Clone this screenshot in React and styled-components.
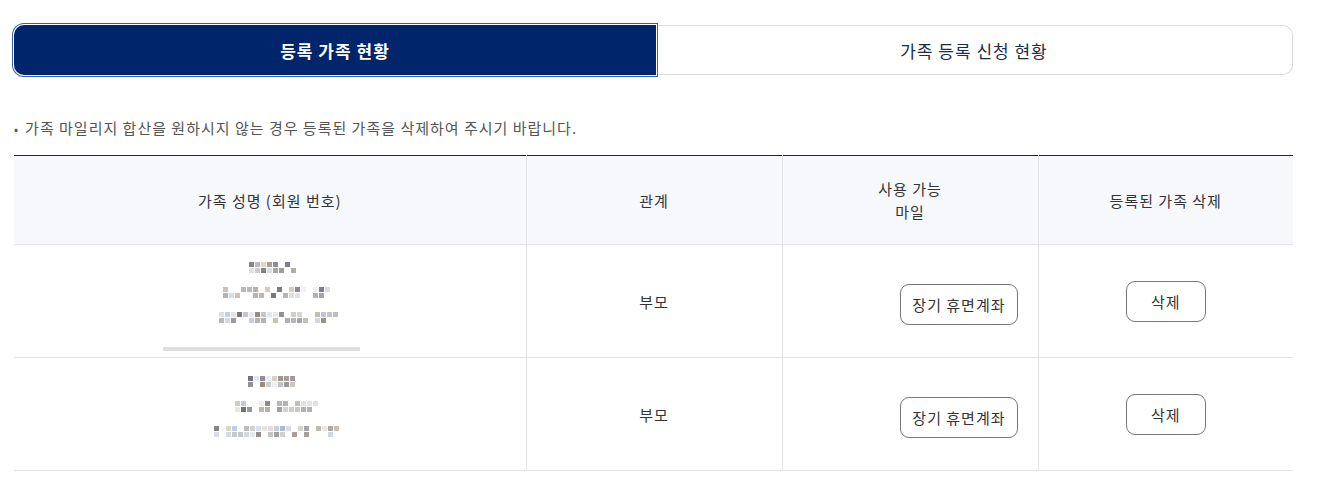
import React from 'react';
import styled, { createGlobalStyle } from 'styled-components';

const GlobalStyle = createGlobalStyle`
  body {
    margin: 0;
    background: #fff;
    font-family: "Noto Sans CJK KR", "Noto Sans", sans-serif;
    letter-spacing: 1px;
  }
`;

const Page = styled.div`
  width: 1324px;
  padding: 25px 0 0 14px;
  box-sizing: border-box;
`;

const Tabs = styled.div`
  display: flex;
  width: 1279px;
  height: 50px;
`;

const Tab = styled.button`
  height: 100%;
  font-family: inherit;
  font-size: 17px;
  letter-spacing: 1px;
  cursor: pointer;
  ${({ $active }) =>
    $active
      ? `
    flex: 0 0 642px;
    background: #00256a;
    color: #fff;
    font-weight: 700;
    border: none;
    border-radius: 10px 0 0 10px;
    box-shadow: 0 0 0 1px #fff, 0 0 0 2px #2f62ae;
    position: relative;
    z-index: 1;
  `
      : `
    flex: 1;
    background: #fff;
    color: #1c2b4a;
    font-weight: 400;
    border: 1px solid #dcdcdc;
    border-left: none;
    border-radius: 0 10px 10px 0;
  `}
`;

const Note = styled.p`
  margin: 44px 0 0;
  font-size: 15px;
  color: #555;
  line-height: 18px;
  &::before {
    content: '•';
    margin-right: 6px;
    font-size: 12px;
  }
`;

const Table = styled.table`
  margin-top: 17px;
  width: 1279px;
  border-collapse: collapse;
  table-layout: fixed;
  border-top: 1px solid #16284a;
`;

const HeadCell = styled.th`
  height: 88px;
  padding: 0;
  background: #f7f8fc;
  font-weight: 400;
  font-size: 15px;
  line-height: 23px;
  color: #333;
  border-left: 1px solid #e4e4e4;
  border-bottom: 1px solid #e4e4e4;
  &:first-child { border-left: none; }
`;

const Cell = styled.td`
  height: 112px;
  padding: 0;
  font-size: 15px;
  color: #333;
  text-align: center;
  vertical-align: middle;
  border-left: 1px solid #e4e4e4;
  border-bottom: 1px solid #e4e4e4;
  &:first-child { border-left: none; }
`;

const NameCell = styled(Cell)`
  vertical-align: top;
`;

const NameStack = styled.div`
  display: flex;
  flex-direction: column;
  align-items: center;
  gap: 13px;
  padding-top: ${({ $top }) => $top}px;
  margin-left: 14px;
`;

const ScrollBar = styled.div`
  width: 197px;
  height: 4px;
  background: #dedede;
  margin: 10px 0 0 -31px;
`;

const OutlineButton = styled.button`
  height: 41px;
  padding: 0 ${({ $wide }) => ($wide ? '11px' : '24px')};
  background: #fff;
  border: 1px solid #777;
  border-radius: 9px;
  font-family: inherit;
  letter-spacing: 1px;
  font-size: 15px;
  color: #333;
  cursor: pointer;
`;

const MileWrap = styled.div`
  display: flex;
  justify-content: flex-end;
  padding: 7px 20px 0 0;
`;

const MosaicLine = styled.svg`
  display: block;
`;

function seeded(seed) {
  let s = seed;
  return () => {
    s = (s * 9301 + 49297) % 233280;
    return s / 233280;
  };
}

const palette = ['#5e5e60', '#77767a', '#9a9a9c', '#bdb3a6', '#a9b8cc', '#6e6676', '#cfd5de', '#8e8378'];

function Mosaic({ width, seed }) {
  const rand = seeded(seed);
  const cols = Math.floor(width / 6);
  const cells = [];
  for (let r = 0; r < 2; r++) {
    for (let c = 0; c < cols; c++) {
      const v = rand();
      if (v < 0.3) continue;
      cells.push(
        <rect
          key={`${r}-${c}`}
          x={c * 6}
          y={r * 6}
          width={5}
          height={5}
          fill={palette[Math.floor(rand() * palette.length)]}
          opacity={0.3 + rand() * 0.65}
        />
      );
    }
  }
  return (
    <MosaicLine width={width} height={12}>
      {cells}
    </MosaicLine>
  );
}

const rows = [
  { lines: [[56, 3], [108, 11], [128, 23]], bar: true, top: 17 },
  { lines: [[58, 37], [84, 41], [126, 53]], bar: false, top: 18 },
];

export default function App() {
  return (
    <>
      <GlobalStyle />
      <Page>
        <Tabs>
          <Tab $active>등록 가족 현황</Tab>
          <Tab>가족 등록 신청 현황</Tab>
        </Tabs>
        <Note>가족 마일리지 합산을 원하시지 않는 경우 등록된 가족을 삭제하여 주시기 바랍니다.</Note>
        <Table>
          <colgroup>
            <col style={{ width: 512 }} />
            <col style={{ width: 256 }} />
            <col style={{ width: 256 }} />
            <col style={{ width: 255 }} />
          </colgroup>
          <thead>
            <tr>
              <HeadCell>가족 성명 (회원 번호)</HeadCell>
              <HeadCell>관계</HeadCell>
              <HeadCell>
                사용 가능
                <br />
                마일
              </HeadCell>
              <HeadCell>등록된 가족 삭제</HeadCell>
            </tr>
          </thead>
          <tbody>
            {rows.map((row, i) => (
              <tr key={i}>
                <NameCell>
                  <NameStack $top={row.top}>
                    {row.lines.map(([w, s]) => (
                      <Mosaic key={s} width={w} seed={s} />
                    ))}
                    {row.bar && <ScrollBar />}
                  </NameStack>
                </NameCell>
                <Cell>부모</Cell>
                <Cell>
                  <MileWrap>
                    <OutlineButton $wide>장기 휴면계좌</OutlineButton>
                  </MileWrap>
                </Cell>
                <Cell>
                  <OutlineButton>삭제</OutlineButton>
                </Cell>
              </tr>
            ))}
          </tbody>
        </Table>
      </Page>
    </>
  );
}
